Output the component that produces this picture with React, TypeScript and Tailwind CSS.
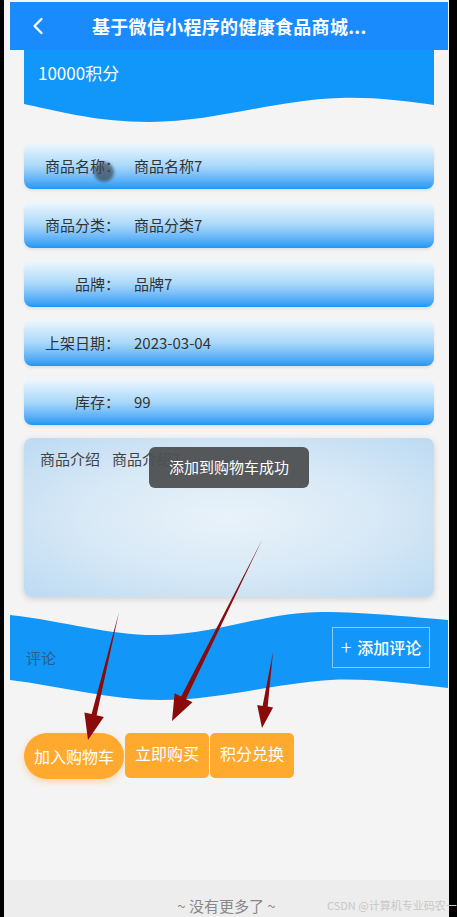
import React from 'react';
import { ChevronLeft } from 'lucide-react';

type Pt = [number, number];

// tapering annotation arrow: thin tail, fat head
const arrowPath = (from: Pt, to: Pt, head = 24, headW = 10) => {
  const dx = to[0] - from[0];
  const dy = to[1] - from[1];
  const len = Math.hypot(dx, dy);
  const ux = dx / len;
  const uy = dy / len;
  const nx = -uy;
  const ny = ux;
  const bx = to[0] - ux * head;
  const by = to[1] - uy * head;
  const p = (x: number, y: number) => `${x.toFixed(1)} ${y.toFixed(1)}`;
  return [
    `M${p(from[0], from[1])}`,
    `L${p(bx + nx * 2.6, by + ny * 2.6)}`,
    `L${p(bx + nx * headW, by + ny * headW)}`,
    `L${p(to[0], to[1])}`,
    `L${p(bx - nx * headW, by - ny * headW)}`,
    `L${p(bx - nx * 2.6, by - ny * 2.6)}`,
    'Z',
  ].join(' ');
};

const rows = [
  { label: '商品名称：', value: '商品名称7' },
  { label: '商品分类：', value: '商品分类7' },
  { label: '品牌：', value: '品牌7' },
  { label: '上架日期：', value: '2023-03-04' },
  { label: '库存：', value: '99' },
];

const App = () => {
  return (
    <div
      className="relative w-[457px] h-[917px] bg-black overflow-hidden flex"
      style={{ fontFamily: '"Noto Sans CJK SC", "Noto Sans", sans-serif' }}
    >
      <div className="ml-[4px] w-[445px] h-full bg-[#f4f4f4] flex flex-col pt-[2px]">
        {/* Header */}
        <div className="ml-[6px] w-[438px] h-[48px] bg-[#1a8bfc] flex items-center shrink-0">
          <ChevronLeft className="ml-[14px] h-7 w-7 text-white" strokeWidth={2} />
          <div className="ml-[40px] text-white text-[18px] font-bold tracking-[0.3px]">
            基于微信小程序的健康食品商城...
          </div>
        </div>

        {/* Points card */}
        <div className="ml-[20px] w-[410px] shrink-0">
          <div className="h-[46px] bg-[#1196fa] flex items-center pl-[14px] text-white text-[17px]">
            10000积分
          </div>
          <svg viewBox="0 0 410 28" width="410" height="28" className="block">
            <path d="M0 0 H410 V9 C380 5 350 1 316 2 C250 4 190 26 126 26 C70 26 30 14 0 8 Z" fill="#1196fa" />
          </svg>
        </div>

        {/* Info rows */}
        <div className="ml-[20px] w-[410px] mt-[19px] flex flex-col gap-[13px] shrink-0">
          {rows.map((row) => (
            <div
              key={row.label}
              className="h-[46px] rounded-[8px] bg-linear-to-b from-[#eef7fd] via-[#a9d8fa] to-[#1898f4] shadow-[0_2px_3px_rgba(0,0,0,0.08)] flex items-center text-[15px] text-[#333]"
            >
              <span className="w-[96px] text-right">{row.label}</span>
              <span className="ml-[14px]">{row.value}</span>
            </div>
          ))}
        </div>

        {/* Description */}
        <div className="ml-[20px] w-[410px] mt-[13px] h-[159px] rounded-[8px] bg-radial from-[#e9f2f9] via-[#d8e9f6] to-[#bcdaf2] shadow-[0_2px_6px_rgba(0,0,0,0.15)] shrink-0 px-[16px] pt-[10px] text-[15px] text-[#444]">
          <span>商品介绍</span>
          <span className="ml-[12px]">商品介绍7</span>
        </div>

        {/* Comment band */}
        <div className="relative ml-[6px] w-[438px] h-[100px] mt-[11px] shrink-0 flex items-center justify-between">
          <svg viewBox="0 0 438 100" width="438" height="100" className="absolute inset-0">
            <path
              d="M0 7 C60 14 100 28 150 27 C210 26 260 2 320 4 C370 5 410 10 438 12 L438 80 C400 76 360 70 320 72 C260 76 210 92 150 92 C100 92 50 78 0 72 Z"
              fill="#1296f8"
            />
          </svg>
          <span className="relative ml-[16px] mt-[0px] text-[15px] text-[#2a5c94]">评论</span>
          <button className="relative mr-[18px] mb-[22px] w-[98px] h-[41px] border border-white/50 text-white text-[16px] font-medium flex items-center justify-center gap-[6px]">
            <span className="text-[20px] leading-none font-light">+</span>
            <span>添加评论</span>
          </button>
        </div>

        {/* Action buttons */}
        <div className="ml-[20px] mt-[25px] flex items-start shrink-0 text-white text-[16px]">
          <button className="w-[100px] h-[46px] rounded-full bg-[#ffa92f] shadow-[0_3px_6px_rgba(255,160,40,0.35)] flex items-center justify-center">
            加入购物车
          </button>
          <button className="ml-[1px] w-[84px] h-[45px] rounded-[5px] bg-[#ffa92f] flex items-start justify-center pt-[8px]">
            立即购买
          </button>
          <button className="ml-[1px] w-[84px] h-[45px] rounded-[5px] bg-[#ffa92f] flex items-start justify-center pt-[8px]">
            积分兑换
          </button>
        </div>

        <div className="flex-1" />

        {/* Footer */}
        <div className="h-[37px] bg-[#ededed] flex items-end justify-center pb-[0px] text-[15px] text-[#888] shrink-0">
          ~ 没有更多了 ~
        </div>
      </div>

      {/* Toast */}
      <div className="absolute left-[149px] top-[447px] w-[160px] h-[41px] rounded-[6px] bg-[#4e5051]/95 text-white text-[15px] flex items-center justify-center">
        添加到购物车成功
      </div>

      {/* Touch cursor */}
      <div className="absolute left-[94px] top-[162px] w-[20px] h-[20px] rounded-full bg-[#3c4650]/70 blur-[1.5px]" />

      {/* Watermark */}
      <div className="absolute left-[327px] top-[897px] text-[11px] text-[#c8c8c8] whitespace-nowrap">
        CSDN @计算机专业码农一枚
      </div>

      {/* Annotation arrows */}
      <svg viewBox="0 0 457 917" width="457" height="917" className="absolute inset-0 pointer-events-none">
        <path d={arrowPath([119, 612], [88, 740], 26, 10)} fill="#8b0a0a" />
        <path d={arrowPath([262, 540], [172, 721], 26, 10)} fill="#8b0a0a" />
        <path d={arrowPath([273, 652], [262, 728], 22, 8)} fill="#8b0a0a" />
      </svg>
    </div>
  );
};

export default App;
